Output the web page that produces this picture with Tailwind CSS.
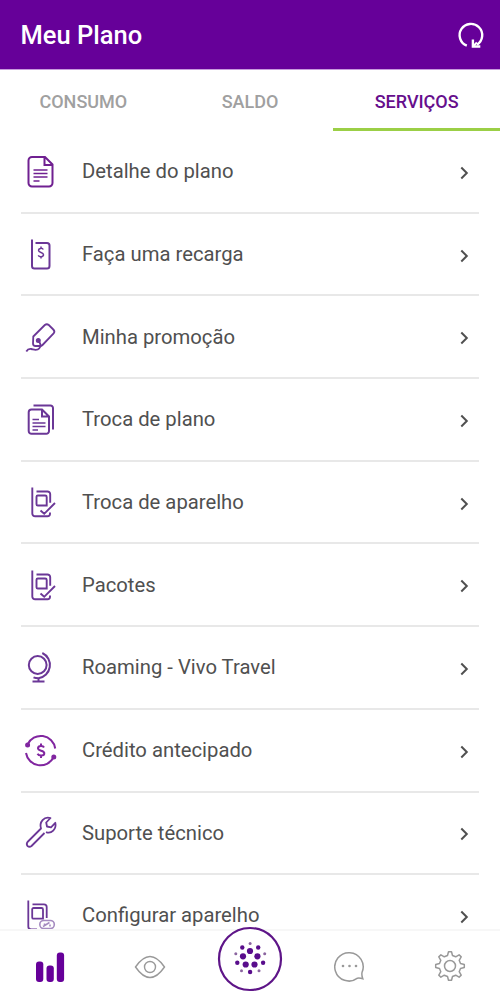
<!DOCTYPE html>
<html lang="pt-BR">
<head>
<meta charset="utf-8">
<title>Meu Plano</title>
<script src="https://cdn.jsdelivr.net/npm/@tailwindcss/browser@4"></script>
</head>
<body class="bg-white">
<svg class="hidden">
  <symbol id="chevron" viewBox="0 0 12 16"><path d="M3.300 2.500 8.800 8 3.300 13.500"/></symbol>
  <symbol id="device" viewBox="0 0 36 36"><path d="M10.300 2.500V28.500a2.800 2.800 0 0 0 2.800 2.800H25.500a2.500 2.500 0 0 0 2.500-2.500v-1.300M14.500 6.500h11A2.700 2.700 0 0 1 28.200 9.200v8.500"/><path d="M15.800 10.500h7.400a1.500 1.500 0 0 1 1.500 1.500v8.500H15.800a1.300 1.300 0 0 1-1.300-1.300v-7.400a1.300 1.300 0 0 1 1.300-1.300zM18.500 25.500l3.700 3.300L33 18"/></symbol>
</svg>
<div class="flex h-[1002px] w-[500px] flex-col overflow-hidden bg-white font-['Roboto',sans-serif] text-[#505050]">
  <header class="flex h-[70px] shrink-0 items-center justify-between border-b border-[#c79bdc] bg-[#660099] pr-[14px] pl-[20.500px]">
    <h1 class="pt-[3px] text-[25.500px] leading-none font-medium text-white">Meu Plano</h1>
    <svg class="size-8" viewBox="0 0 32 32" fill="none" stroke="#fff" stroke-width="2.400"><path d="M12.800 26.700A11.300 11.300 0 1 1 23 25.700"/><path d="M18.900 20.500v7H26.300"/><path d="M18.900 27.500l4-4" stroke-width="2"/></svg>
  </header>
  <nav class="grid h-[61px] shrink-0 grid-cols-3 text-center text-[18px] font-medium text-[#a0a0a0]">
    <div class="flex items-center justify-center pt-px">CONSUMO</div>
    <div class="flex items-center justify-center pt-px">SALDO</div>
    <div class="flex items-center justify-center border-b-[3px] border-[#9bcf46] pt-[4px] text-[#660e8c]">SERVIÇOS</div>
  </nav>
  <main class="min-h-0 flex-1 overflow-hidden px-[21px] text-[20.250px]">
    <ul class="flex flex-col text-[#6b3797]">
      <li class="flex h-[82.7px] shrink-0 items-center border-b-2 border-[#e8e8e8]">
        <svg class="mt-[2px] ml-px size-9 text-[#702091]" viewBox="0 0 36 36" fill="none" stroke="currentColor" stroke-width="2"><path d="M10 3h13l7.500 7.500V29a3.500 3.500 0 0 1-3.500 3.500H10A3.500 3.500 0 0 1 6.500 29V6.500A3.500 3.500 0 0 1 10 3zM22.500 3v8H30.500"/><path d="M11.500 16h14M11.500 19.500h14M11.500 23h14M11.500 27h6" stroke-width="1.500"/></svg>
        <span class="ml-6 flex-1 text-[#505050]">Detalhe do plano</span>
        <svg class="mt-[3px] mr-[9px] h-4 w-3" fill="none" stroke="#505050" stroke-width="2"><use href="#chevron"/></svg>
      </li>
      <li class="flex h-[82.7px] shrink-0 items-center border-b-2 border-[#e8e8e8]">
        <svg class="mt-[2px] ml-px size-9" viewBox="0 0 36 36" fill="none" stroke="currentColor" stroke-width="2"><path d="M10 2.500V29a2.500 2.500 0 0 0 2.500 2.500h12.500a2.500 2.500 0 0 0 2.500-2.500V8.500A2.500 2.500 0 0 0 25 6H13.500"/><path d="M21.300 12.500c-1-1.800-4.800-1.400-4.800.8 0 2.800 5 1.600 5 4.400 0 2.300-4 2.600-5.300.7M19 9.500v2M19 19v2.500" stroke-width="1.500"/></svg>
        <span class="ml-6 flex-1 text-[#505050]">Faça uma recarga</span>
        <svg class="mt-[3px] mr-[9px] h-4 w-3" fill="none" stroke="#505050" stroke-width="2"><use href="#chevron"/></svg>
      </li>
      <li class="flex h-[82.7px] shrink-0 items-center border-b-2 border-[#e8e8e8]">
        <svg class="mt-[2px] ml-px size-9" viewBox="0 0 36 36" fill="none" stroke="currentColor" stroke-width="1.800"><path d="m11.300 16.500 11.500-11.500q2-1.500 4 0l4.500 4.500q2 2 .3 4L20.500 25q-1 1-2.500 1h-4.500q-2.500 0-2.500-2.500z"/><circle cx="16.300" cy="20.500" r="1.600" fill="currentColor"/><path d="M16.500 21q3.500 4 .8 7.300c-2.500 2.800-5.300 1.200-8 .7q-3.300-.5-5 2.500"/></svg>
        <span class="ml-6 flex-1 text-[#505050]">Minha promoção</span>
        <svg class="mt-[3px] mr-[9px] h-4 w-3" fill="none" stroke="#505050" stroke-width="2"><use href="#chevron"/></svg>
      </li>
      <li class="flex h-[82.7px] shrink-0 items-center border-b-2 border-[#e8e8e8]">
        <svg class="mt-[2px] ml-px size-9" viewBox="0 0 36 36" fill="none" stroke="currentColor" stroke-width="2"><path d="M9.500 7.500h10.500l7 7V29a2.800 2.800 0 0 1-2.800 2.800H9.500A2.800 2.800 0 0 1 6.700 29V10.300a2.800 2.800 0 0 1 2.800-2.800zM20 7.500v7h7M11.500 3.500h17a2.500 2.500 0 0 1 2.500 2.500v21.500"/><path d="M10.500 17.500h6.500M10.500 21h13M10.500 24.500h13M10.500 28h5.500" stroke-width="1.400"/></svg>
        <span class="ml-6 flex-1 text-[#505050]">Troca de plano</span>
        <svg class="mt-[3px] mr-[9px] h-4 w-3" fill="none" stroke="#505050" stroke-width="2"><use href="#chevron"/></svg>
      </li>
      <li class="flex h-[82.7px] shrink-0 items-center border-b-2 border-[#e8e8e8]">
        <svg class="mt-[2px] ml-px size-9" fill="none" stroke="currentColor" stroke-width="1.900"><use href="#device"/></svg>
        <span class="ml-6 flex-1 text-[#505050]">Troca de aparelho</span>
        <svg class="mt-[3px] mr-[9px] h-4 w-3" fill="none" stroke="#505050" stroke-width="2"><use href="#chevron"/></svg>
      </li>
      <li class="flex h-[82.7px] shrink-0 items-center border-b-2 border-[#e8e8e8]">
        <svg class="mt-[2px] ml-px size-9" fill="none" stroke="currentColor" stroke-width="1.900"><use href="#device"/></svg>
        <span class="ml-6 flex-1 text-[#505050]">Pacotes</span>
        <svg class="mt-[3px] mr-[9px] h-4 w-3" fill="none" stroke="#505050" stroke-width="2"><use href="#chevron"/></svg>
      </li>
      <li class="flex h-[82.7px] shrink-0 items-center border-b-2 border-[#e8e8e8]">
        <svg class="mt-[2px] ml-px size-9" viewBox="0 0 36 36" fill="none" stroke="currentColor" stroke-width="2"><circle cx="15.700" cy="15" r="8.900"/><path d="M20.300 3A13.300 13.300 0 0 1 16.500 28.200V31.500M10.500 31.500h12M16.500 28.200q-3 0-5-.9"/></svg>
        <span class="ml-6 flex-1 text-[#505050]">Roaming - Vivo Travel</span>
        <svg class="mt-[3px] mr-[9px] h-4 w-3" fill="none" stroke="#505050" stroke-width="2"><use href="#chevron"/></svg>
      </li>
      <li class="flex h-[82.7px] shrink-0 items-center border-b-2 border-[#e8e8e8]">
        <svg class="mt-px ml-px size-9 text-[#8126a0]" viewBox="0 0 36 36" fill="none" stroke="currentColor" stroke-width="2"><path d="M5.600 11.500A14.500 14.500 0 0 1 33.200 15.500M4 20a14.700 14.700 0 0 0 27.500 4.500"/><circle cx="5.600" cy="12" r="1.500" fill="currentColor"/><circle cx="31.800" cy="24" r="1.500" fill="currentColor"/><path d="M22 14.500c-1-2.300-6-2-6 .7 0 3.300 6.300 1.700 6.300 5 0 3-5.500 3-6.800.5M19 10.500v2.500M19 22.500v2.500"/></svg>
        <span class="ml-6 flex-1 text-[#505050]">Crédito antecipado</span>
        <svg class="mt-[3px] mr-[9px] h-4 w-3" fill="none" stroke="#505050" stroke-width="2"><use href="#chevron"/></svg>
      </li>
      <li class="flex h-[82.7px] shrink-0 items-center border-b-2 border-[#e8e8e8]">
        <svg class="ml-px size-9" viewBox="0 0 36 36" fill="none" stroke="currentColor" stroke-width="1.800" stroke-linejoin="round"><path d="M22.500 18 9.500 31q-2 1.500-4 0-1.500-2 0-4L19 13.500c-2-6.500 3-12.500 9.500-10.500l-4.300 4.500.8 4 4 .8 4.300-4.500c1.500 6.500-4 11.500-9.300 9.300"/></svg>
        <span class="ml-6 flex-1 text-[#505050]">Suporte técnico</span>
        <svg class="mt-[2px] mr-[9px] h-4 w-3" fill="none" stroke="#505050" stroke-width="2"><use href="#chevron"/></svg>
      </li>
      <li class="flex h-[80px] shrink-0 items-center">
        <svg class="mt-[3px] ml-px size-9" viewBox="0 0 36 36" fill="none" stroke="currentColor" stroke-width="1.800"><path d="M6.300 1.500V27.500a3 3 0 0 0 3 3H15M10.500 5.300H22a2.700 2.700 0 0 1 2.700 2.700v11M11.500 9h8a1.500 1.500 0 0 1 1.500 1.500v9.200H11.500a1.300 1.300 0 0 1-1.300-1.300v-8.100A1.300 1.300 0 0 1 11.500 9z"/><g stroke="#a58bc0" stroke-width="1.600"><rect x="17.800" y="21.500" width="14.500" height="8" rx="4"/><path d="M21 27.500l6.500-4M22.500 24.500v2M28 25.500v2"/></g></svg>
        <span class="ml-6 flex-1 text-[#505050]">Configurar aparelho</span>
        <svg class="mt-[3px] mr-[9px] h-4 w-3" fill="none" stroke="#505050" stroke-width="2"><use href="#chevron"/></svg>
      </li>
    </ul>
  </main>
  <footer class="z-10 grid h-[73px] shrink-0 grid-cols-5 items-center justify-items-center border-t-2 border-[#f7f7f7] bg-white">
    <svg class="h-8 w-8" viewBox="34 951 32 32" fill="#660099"><rect x="36" y="961.500" width="7.300" height="20.500" rx="3"/><rect x="46.500" y="965.500" width="7.300" height="16.500" rx="3"/><rect x="56.800" y="952.500" width="7.300" height="29.500" rx="3"/></svg>
    <svg class="h-8 w-8" viewBox="0 0 32 32" fill="none" stroke="#999" stroke-width="1.400"><path d="M1.500 16Q16-5 30.500 16 16 37 1.500 16z"/><circle cx="16" cy="16" r="5.500"/></svg>
    <svg class="-mt-[16px] size-[66px]" viewBox="217 926 66 66"><circle cx="250" cy="959" r="31" fill="#fff" stroke="#5e1588" stroke-width="2.200"/><g fill="#590d8c"><circle cx="250" cy="951" r="3.100"/><circle cx="243" cy="956.300" r="3.100"/><circle cx="257.400" cy="956.300" r="3.100"/><circle cx="245.700" cy="964.500" r="3.100"/><circle cx="254.500" cy="964.500" r="3.100"/><circle cx="242.300" cy="947.500" r="2.200"/><circle cx="258.200" cy="947.500" r="2.200"/><circle cx="237.300" cy="962.700" r="2.200"/><circle cx="263.100" cy="962.700" r="2.200"/><circle cx="250.100" cy="972" r="2.200"/></g><g fill="#8b65a0"><circle cx="250.100" cy="943.400" r="1.500"/><circle cx="235.800" cy="953.700" r="1.500"/><circle cx="264.700" cy="953.700" r="1.500"/><circle cx="241.500" cy="970.700" r="1.500"/><circle cx="259" cy="970.700" r="1.500"/></g></svg>
    <svg class="-mt-[2px] h-8 w-8" viewBox="0 0 32 32" fill="none" stroke="#999" stroke-width="1.500"><path d="M23.500 28.200A14.200 14.200 0 1 1 28 22.500q-.5 3 .8 6.200-3-.8-5.300-.5z"/><g fill="#999" stroke="none"><circle cx="9" cy="16" r="1.300"/><circle cx="15.500" cy="16" r="1.300"/><circle cx="22" cy="16" r="1.300"/></g></svg>
    <svg class="-mt-px h-8 w-8" viewBox="0 0 32 32" fill="none" stroke="#999" stroke-width="1.500" stroke-linejoin="round"><circle cx="16" cy="16" r="5.500"/><path d="M13.500 5.500 14.500 1.700h3l1 3.800 3.200 1.300 3.400-2 2.100 2.100-2 3.400 1.300 3.200 3.800 1v3l-3.800 1-1.300 3.200 2 3.400-2.100 2.100-3.400-2-3.200 1.300-1 3.800h-3l-1-3.800-3.200-1.300-3.400 2-2.100-2.100 2-3.400-1.300-3.200-3.800-1v-3l3.800-1 1.300-3.200-2-3.400 2.100-2.100 3.400 2z"/></svg>
  </footer>
</div>
</body>
</html>
